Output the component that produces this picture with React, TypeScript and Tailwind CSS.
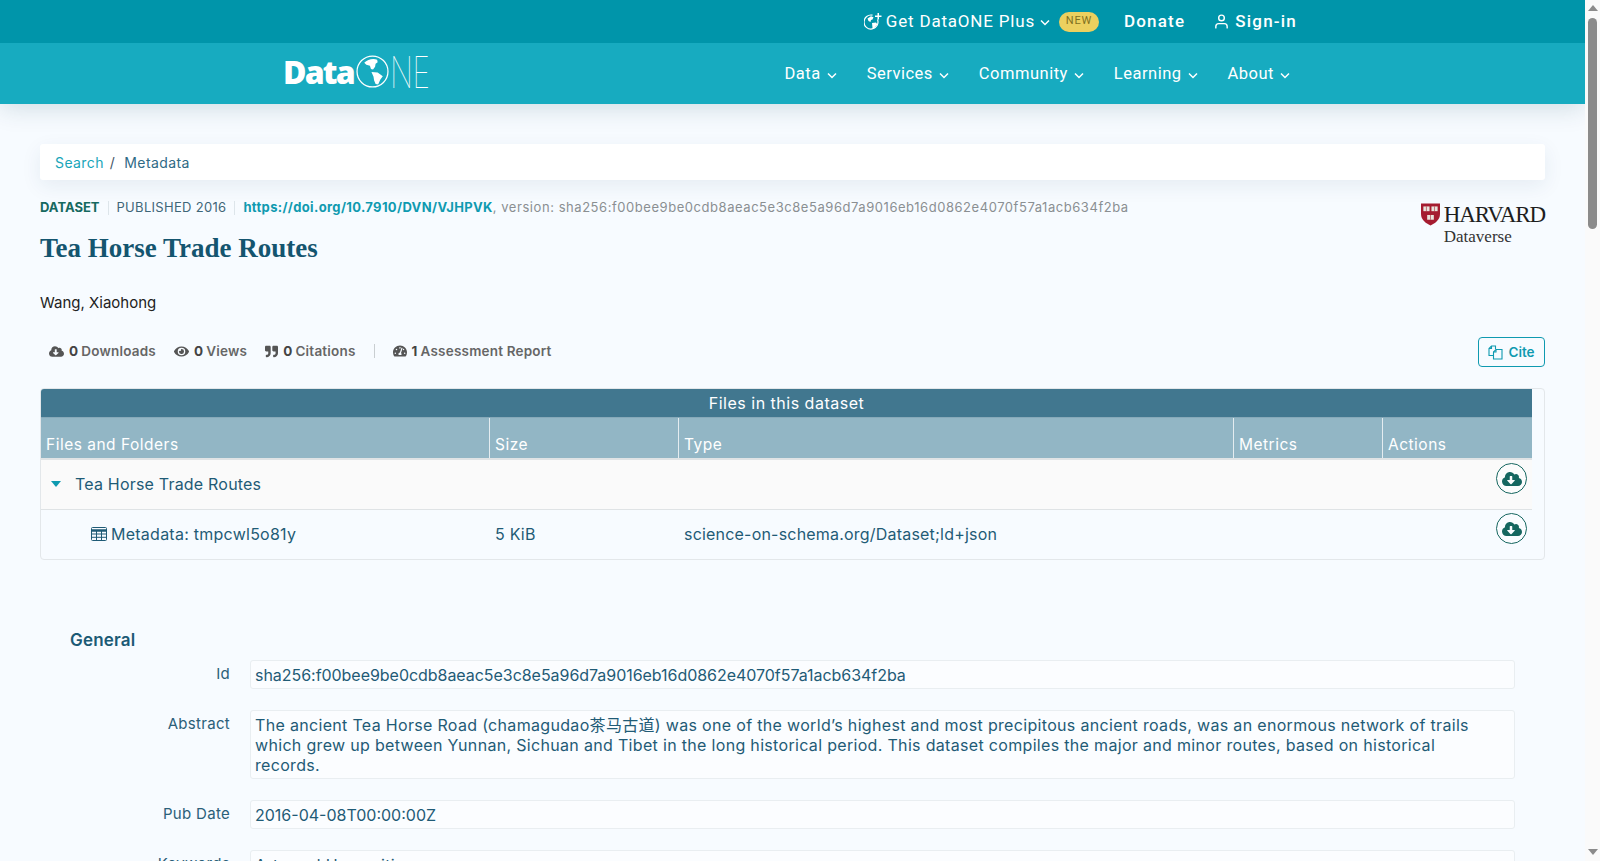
import { FaCloudDownloadAlt, FaEye, FaQuoteRight, FaTachometerAlt } from "react-icons/fa";
import { FiUser } from "react-icons/fi";

const body = "font-['Inter','Noto_Sans_CJK_SC',sans-serif]";

function Chevron() {
    return (
        <svg width="10" height="7" viewBox="0 0 10 7" fill="none" stroke="currentColor" strokeWidth="1.5" className="mt-[2px]">
            <path d="M1 1.5 5 5.5 9 1.5" />
        </svg>
    );
}

function NavItem({ label }: { label: string }) {
    return (
        <a className="flex items-center gap-[6px]">
            {label}
            <Chevron />
        </a>
    );
}

function GlobePlus() {
    return (
        <svg width="18" height="18" viewBox="0 0 18 18" fill="white">
            <path d="M13.500 6.500A7 7 0 1 1 8.500 2.200" fill="none" stroke="white" strokeWidth="1.200" />
            <path d="M3.500 5.500 7 3.200l2.500 1-1 2.300-1.500.5-.5 2L4.500 8z" />
            <path d="M8 10l4-.5 1.500 2-2.500 2.500-1 2-1.500-1z" />
            <path d="M13.500 0h1.500v2.500h2.500V4H15v2.500h-1.500V4H11V2.500h2.500z" />
        </svg>
    );
}

function Logo() {
    return (
        <div className="flex items-center text-white h-[34px] mb-[4px]">
            <span className="font-['Open_Sans',sans-serif] font-extrabold text-[32px] tracking-[-1.8px] leading-none">Data</span>
            <svg width="33" height="33" viewBox="0 0 32 32" className="ml-[2px]">
                <circle cx="16" cy="16" r="15" fill="none" stroke="white" strokeWidth="1.200" />
                <path d="M8 7.500C11 4 17 3 20.500 4.500L21 7l-2 1.500-.5 3-2 2.500-2-.5-1-3-3.500-1z" fill="white" />
                <path d="M15 16.500l6 .5 5 3.500-2.500 3.500-2 4.500-2.500-.5-1.500-3.500-.5-3.500z" fill="white" />
            </svg>
            <span className="font-['Inter',sans-serif] font-thin text-[44px] leading-none tracking-[-1px] scale-x-[0.68] origin-left ml-[1px]">NE</span>
        </div>
    );
}

function HarvardLogo() {
    return (
        <div className="flex flex-col items-start">
            <div className="flex items-center gap-[4px]">
                <svg width="19" height="23" viewBox="0 0 20 23">
                    <path d="M0 0h20v11c0 6-5 10-10 12C5 21 0 17 0 11z" fill="#a51c30" />
                    <rect x="2.500" y="3" width="6.500" height="5" fill="#e8e4dc" />
                    <rect x="11" y="3" width="6.500" height="5" fill="#e8e4dc" />
                    <rect x="6.500" y="12" width="7" height="5" fill="#e8e4dc" />
                    <path d="M5.700 3v5M14.200 3v5M10 12v5" stroke="#a51c30" strokeWidth=".6" />
                </svg>
                <span className="font-['Liberation_Serif',serif] text-[23px] leading-none tracking-[-1.1px] text-[#1e1e1e]">HARVARD</span>
            </div>
            <span className="font-['Liberation_Serif',serif] text-[17px] leading-none text-[#333] ml-[23px] mt-[2px]">Dataverse</span>
        </div>
    );
}

function TableIcon() {
    return (
        <svg width="16" height="14" viewBox="0 0 16 14" fill="none" stroke="currentColor" strokeWidth="1" className="mr-[4px]">
            <rect x=".5" y=".5" width="15" height="13" rx="1" />
            <path d="M.5 3.500h15" strokeWidth="2.500" />
            <path d="M.5 7h15M.5 10.300h15M5.500 3.500v10M10.500 3.500v10" />
        </svg>
    );
}

function FilesIcon() {
    return (
        <svg width="15" height="15" viewBox="0 0 15 15" fill="none" stroke="currentColor" strokeWidth="1.100">
            <path d="M5.500 10.500H1V3.500L3.500 1H7.500v3" />
            <path d="M3.500 1v2.500H1" />
            <path d="M5.500 14V7L8 4.500h6V14z" />
            <path d="M8 4.500V7H5.500" />
        </svg>
    );
}

function Stat({ icon, count, label }: { icon: React.ReactNode; count: string; label: string }) {
    return (
        <span className="flex items-center text-[#666] tracking-[0.2px]">
            <span className="mr-[5px] text-[#555]">{icon}</span>
            <b className="text-[#444] mr-[3px] font-bold">{count}</b>
            <span className="font-semibold">{label}</span>
        </span>
    );
}

function DownloadButton() {
    return (
        <span className="size-[31px] rounded-full border border-[#15665f] flex items-center justify-center text-[#15665f] bg-white/40">
            <FaCloudDownloadAlt size={20} />
        </span>
    );
}

function Field({ label, children, className = "" }: { label: string; children: React.ReactNode; className?: string }) {
    return (
        <div className="flex">
            <label className="w-[160px] text-right text-[15px] tracking-[0.3px] text-[#2b6079] pt-[2px] leading-[24px] shrink-0">{label}</label>
            <div className={"ml-[20px] flex-1 border border-[#e9eef1] rounded-[3px] bg-[#fbfdff] pl-[4px] py-[3.500px] text-[16px] leading-[20px] text-[#1f5b76] " + className}>
                {children}
            </div>
        </div>
    );
}

export default function App() {
    return (
        <div className={"h-[861px] overflow-hidden flex bg-[#fafafa] " + body}>
            <div className="w-[1585px] shrink-0 bg-[#f7fbff] overflow-hidden">
                <header className="shadow-[0_4px_24px_rgba(0,60,80,0.16)] relative">
                    <div className="h-[43px] bg-[#0095aa] flex items-center justify-end pr-[288px] text-white font-['Roboto',sans-serif] gap-[24px]">
                        <span className="flex items-center text-[17px] tracking-[0.8px]">
                            <span className="mr-[4px]"><GlobePlus /></span>
                            Get DataONE Plus
                            <span className="ml-[5px]"><Chevron /></span>
                            <span className="ml-[9px] w-[40px] h-[20px] rounded-full bg-[#ecd05f] text-[#80701f] text-[11px] tracking-[0.8px] flex items-center justify-center">NEW</span>
                        </span>
                        <span className="text-[17px] font-medium tracking-[1.2px] ml-[1px]">Donate</span>
                        <span className="flex items-center gap-[5px] text-[17px] font-medium tracking-[1.2px] ml-[4px]">
                            <FiUser size={17} />
                            Sign-in
                        </span>
                    </div>
                    <div className="h-[61px] bg-[#17abc0] flex items-center text-white font-['Roboto',sans-serif] text-[16.500px] tracking-[0.5px] pl-[283px] pr-[295px]">
                        <Logo />
                        <nav className="ml-auto flex items-center gap-[30px] pt-[2px]">
                            <NavItem label="Data" />
                            <NavItem label="Services" />
                            <NavItem label="Community" />
                            <NavItem label="Learning" />
                            <NavItem label="About" />
                        </nav>
                    </div>
                </header>

                <main className="px-[40px] pt-[40px]">
                    <div className="h-[36px] bg-white rounded-[3px] shadow-[0_6px_20px_rgba(30,70,100,0.08)] flex items-center px-[15px] text-[14px] tracking-[0.4px]">
                        <a className="text-[#17a5b9]">Search</a>
                        <span className="text-[#456] ml-[6px]">/</span>
                        <span className="text-[#2f6a85] ml-[9px]">Metadata</span>
                    </div>

                    <div className="flex justify-between mt-[17px]">
                        <div>
                            <div className="flex items-center h-[22px] text-[13px]">
                                <span className="font-bold text-[#16695f]">DATASET</span>
                                <span className="mx-[8px] w-px h-[14px] bg-[#dde5ea]" />
                                <span className="text-[#3f6678] tracking-[0.3px]">PUBLISHED 2016</span>
                                <span className="mx-[8px] w-px h-[14px] bg-[#dde5ea]" />
                                <a className="font-bold text-[#0f9ab0] tracking-[0.35px]">https://doi.org/10.7910/DVN/VJHPVK</a>
                                <span className="text-[#8a8f92] tracking-[0.55px]">, version: sha256:f00bee9be0cdb8aeac5e3c8e5a96d7a9016eb16d0862e4070f57a1acb634f2ba</span>
                            </div>
                            <h1 className="font-['Liberation_Serif',serif] font-bold text-[27px] leading-[32px] text-[#14556f] mt-[13px]">Tea Horse Trade Routes</h1>
                        </div>
                        <div className="mt-[6px]"><HarvardLogo /></div>
                    </div>

                    <p className="text-[15px] text-[#222] leading-[20px] mt-[29px]">Wang, Xiaohong</p>

                    <div className="flex items-center justify-between mt-[24px] h-[30px]">
                        <div className="flex items-center pl-[9px] pb-[2px] text-[13.500px] gap-[18px]">
                            <Stat icon={<FaCloudDownloadAlt size={15} />} count="0" label="Downloads" />
                            <Stat icon={<FaEye size={15} />} count="0" label="Views" />
                            <Stat icon={<FaQuoteRight size={13} />} count="0" label="Citations" />
                            <span className="w-px h-[14px] bg-[#c9ced1]" />
                            <Stat icon={<FaTachometerAlt size={14} />} count="1" label="Assessment Report" />
                        </div>
                        <button className="w-[67px] h-[30px] border border-[#0f9ab0] rounded-[4px] flex items-center justify-center gap-[5px] text-[13.500px] font-semibold text-[#0f9ab0]">
                            <FilesIcon />
                            Cite
                        </button>
                    </div>

                    <section className="mt-[21px] border border-[#e3e7ea] rounded-[4px] pr-[12px] pl-0 overflow-hidden h-[172px]">
                        <div className="h-[28px] bg-[#41778f] text-white text-[16px] flex items-center justify-center pb-[1px] tracking-[0.5px]">Files in this dataset</div>
                        <div className="grid grid-cols-[449px_189px_555px_149px_1fr] h-[43px] bg-[#92b6c5] border-t border-[#86a9b9] border-b-[2px] border-b-[#dfe3e5] text-white text-[15.500px] tracking-[0.5px] [&>div]:px-[5px] [&>div]:pt-[16px] [&>div]:leading-[22px]">
                            <div className="border-r border-[#e4ecf0]">Files and Folders</div>
                            <div className="border-r border-[#e4ecf0]">Size</div>
                            <div className="border-r border-[#e4ecf0]">Type</div>
                            <div className="border-r border-[#e4ecf0]">Metrics</div>
                            <div>Actions</div>
                        </div>
                        <div className="h-[50px] bg-[#fafafa] border-b border-[#dfe3e5] flex items-start justify-between text-[16px] text-[#1f5b76] tracking-[0.2px]">
                            <span className="flex items-center h-[48.500px]">
                                <span className="ml-[10px] w-0 h-0 border-x-[5px] border-x-transparent border-t-[6px] border-t-[#0f9ab0]" />
                                <span className="ml-[14px]">Tea Horse Trade Routes</span>
                            </span>
                            <span className="mt-[3px] mr-[5px]"><DownloadButton /></span>
                        </div>
                        <div className="h-[49px] grid grid-cols-[449px_189px_1fr_auto] text-[16px] text-[#1f5b76] tracking-[0.2px]">
                            <span className="flex items-center pl-[50px] h-[48.500px] tracking-[0.25px]">
                                <TableIcon />
                                Metadata: tmpcwl5o81y
                            </span>
                            <span className="flex items-center pl-[5px] h-[48.500px]">5 KiB</span>
                            <span className="flex items-center pl-[5px] h-[48.500px]">science-on-schema.org/Dataset;ld+json</span>
                            <span className="mt-[3px] mr-[5px]"><DownloadButton /></span>
                        </div>
                    </section>

                    <section className="ml-[30px] mr-[30px] mt-[68px]">
                        <h2 className="text-[17px] font-semibold text-[#1b5a75] leading-[24px] tracking-[0.2px]">General</h2>
                        <div className="flex flex-col gap-[21px] mt-[8px]">
                            <Field label="Id" className="tracking-[-0.04px]">sha256:f00bee9be0cdb8aeac5e3c8e5a96d7a9016eb16d0862e4070f57a1acb634f2ba</Field>
                            <Field label="Abstract" className="tracking-[0.32px] pr-[24px]">
                                The ancient Tea Horse Road (chamagudao茶马古道) was one of the world’s highest and most precipitous ancient roads, was an enormous network of trails which grew up between Yunnan, Sichuan and Tibet in the long historical period. This dataset compiles the major and minor routes, based on historical records.
                            </Field>
                            <Field label="Pub Date">2016-04-08T00:00:00Z</Field>
                            <Field label="Keywords" className="tracking-[0.3px]">Arts and Humanities</Field>
                        </div>
                    </section>
                </main>
            </div>
            <div className="w-[15px] h-full flex flex-col items-center justify-between pt-[5px] pb-[6px] bg-[#fafafa]">
                <div className="flex flex-col items-center">
                    <span className="w-0 h-0 border-x-[5px] border-x-transparent border-b-[6px] border-b-[#8b8b8b]" />
                    <span className="w-[9px] h-[211px] mt-[7px] rounded-[5px] bg-[#8b8b8b]" />
                </div>
                <span className="w-0 h-0 border-x-[5px] border-x-transparent border-t-[6px] border-t-[#8b8b8b]" />
            </div>
        </div>
    );
}
